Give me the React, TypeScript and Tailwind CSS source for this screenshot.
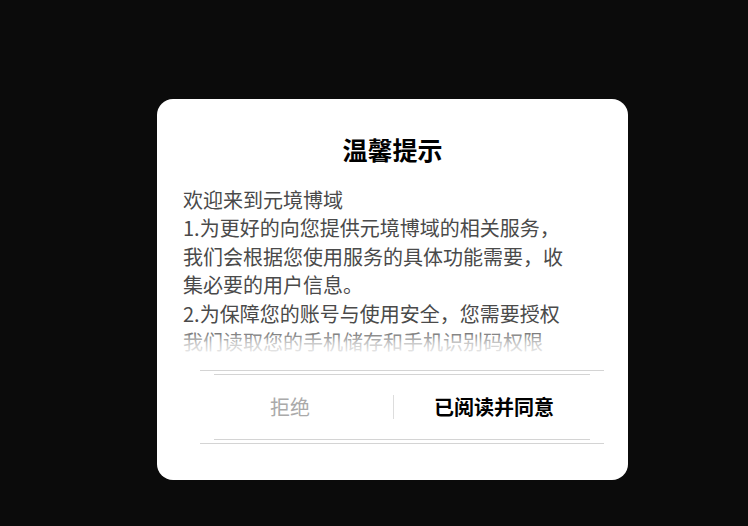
const lines = [
  '欢迎来到元境博域',
  '1.为更好的向您提供元境博域的相关服务，',
  '我们会根据您使用服务的具体功能需要，收',
  '集必要的用户信息。',
  '2.为保障您的账号与使用安全，您需要授权',
  '我们读取您的手机储存和手机识别码权限',
];

export default function App() {
  return (
    <div
      className="w-full h-[526px] bg-[#0b0b0b] pl-[157px] pt-[99px]"
      style={{ fontFamily: '"Noto Sans CJK SC", "Noto Sans", sans-serif' }}
    >
      <div className="w-[471px] h-[381px] bg-white rounded-[16px] flex flex-col">
        <h1 className="pt-[33px] text-center text-[25px] leading-[34px] font-bold text-black">温馨提示</h1>

        {/* agreement text, faded at the bottom */}
        <div className="relative mt-[20px] mx-[26px] h-[173px] overflow-hidden">
          {lines.map((t) => (
            <p key={t} className="text-[20px] leading-[28.4px] text-[#4a4a4a] whitespace-nowrap">
              {t}
            </p>
          ))}
          <div className="absolute left-0 right-0 bottom-0 h-[32px] bg-gradient-to-b from-white/0 via-white/70 to-white" />
        </div>

        <div className="mt-[11px] ml-[43px] mr-[24px] h-px bg-[#d4d4d4]" />
        <div className="mt-[3px] ml-[57px] mr-[38px] h-px bg-[#d4d4d4]" />

        <div className="ml-[43px] mr-[24px] h-[64px] flex items-center">
          <button className="w-[180px] shrink-0 text-center text-[20px] leading-[28px] text-[#aaa]">拒绝</button>
          <div className="ml-[13px] w-px h-[24px] shrink-0 bg-[#ddd]" />
          <button className="w-[200px] shrink-0 text-center text-[20px] leading-[28px] font-bold text-black">已阅读并同意</button>
        </div>

        <div className="ml-[57px] mr-[38px] h-px bg-[#d4d4d4]" />
        <div className="mt-[3px] ml-[43px] mr-[24px] h-px bg-[#d4d4d4]" />
      </div>
    </div>
  );
}
